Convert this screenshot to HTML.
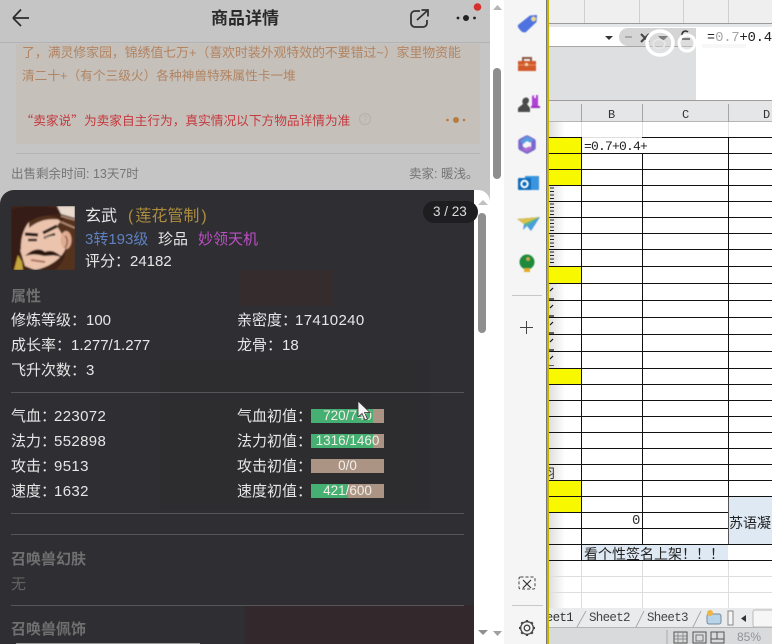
<!DOCTYPE html>
<html><head><meta charset="utf-8"><style>
html,body{margin:0;padding:0;width:772px;height:644px;overflow:hidden;background:#fff}
*{box-sizing:border-box}
body{font-family:"Liberation Sans","Noto Sans CJK SC",sans-serif;position:relative}
.a{position:absolute;white-space:nowrap}
.t{position:absolute;white-space:nowrap;font-size:15px;line-height:20px;color:#e6e6e6;margin-top:1px}
.t b{font-weight:normal;letter-spacing:.35px;margin-left:-2px}
.h{position:absolute;left:549px;width:223px;height:1px;background:#111}
.v{position:absolute;width:1px;background:#111}
.y{position:absolute;left:549px;width:32px;background:#f8f800}
.l{position:absolute;left:11px;width:453px;height:1px;background:#56565a}
.bar{position:absolute;left:311px;width:73px;height:14px;background:#ab9484;color:#f2efe8;font-size:13.500px;line-height:14px;text-align:center;overflow:hidden}
.bar i{position:absolute;left:0;top:0;height:14px;background:#45b072}
.bar span{position:relative}
.lg{position:absolute;left:549px;width:223px;height:1px;background:#dedede}
.mono{font-family:"Liberation Mono","Noto Sans CJK SC",monospace}
.q{font-family:"Noto Sans CJK SC",sans-serif}
</style></head><body>

<!-- left page -->
<div class="a" style="left:0;top:0;width:490px;height:644px;background:#c5c5c5"></div>
<div class="a" style="left:0;top:42px;width:490px;height:1px;background:#b2b2b2"></div>
<svg class="a" style="left:0;top:0" width="490" height="44" viewBox="0 0 490 44">
<path d="M29 18H13M13 18L21 9.500M13 18L21 26" fill="none" stroke="#2b2b2b" stroke-width="1.700"/>
<path d="M420 11h-5a4 4 0 0 0-4 4v8a4 4 0 0 0 4 4h8a4 4 0 0 0 4-4v-3M417 20L427.500 10.500M421.500 10h6.500v6.500" fill="none" stroke="#333" stroke-width="1.800"/>
<circle cx="466" cy="18" r="3" fill="#222"/><circle cx="458" cy="18" r="1.400" fill="#222"/><circle cx="474.500" cy="18" r="1.400" fill="#222"/>
<circle cx="477.500" cy="7" r="3.800" fill="#d5302c"/>
</svg>
<div class="a" style="left:211px;top:9px;font-size:17px;line-height:20px;font-weight:bold;color:#2a2a2a">商品详情</div>
<div class="a" style="left:16px;top:44px;width:464px;height:100px;background:#c5c0b9"></div>
<div class="a" style="left:22px;top:43px;font-size:12.850px;line-height:20px;color:#b28462">了，满灵修家园，锦绣值七万+（喜欢时装外观特效的不要错过~）家里物资能</div>
<div class="a" style="left:22px;top:66px;font-size:12.700px;line-height:20px;color:#b28462">清二十+（有个三级火）各种神兽特殊属性卡一堆</div>
<div class="a" style="left:20.500px;top:110px;font-size:12.700px;line-height:20px;color:#c5393f"><span class="q">“</span>卖家说<span class="q">”</span>为卖家自主行为，真实情况以下方物品详情为准</div>
<div class="a" style="left:359px;top:113px;width:12px;height:12px;border:1px solid #b5b0a8;border-radius:50%;font-size:9px;line-height:10px;text-align:center;color:#b5b0a8">?</div>
<svg class="a" style="left:440px;top:112px" width="30" height="16"><circle cx="16" cy="8" r="3" fill="#b77c3e"/><circle cx="7.500" cy="8" r="1.300" fill="#b77c3e"/><circle cx="24" cy="8" r="1.300" fill="#b77c3e"/></svg>
<div class="a" style="left:16px;top:153px;width:464px;height:1px;background:#b5b5b5"></div>
<div class="a" style="left:11px;top:165px;font-size:12.500px;line-height:18px;color:#757575">出售剩余时间: 13天7时</div>
<div class="a" style="left:409px;top:165px;font-size:12.500px;line-height:18px;color:#757575">卖家: 暖浅。</div>

<!-- scrollbar -->
<div class="a" style="left:490px;top:0;width:14px;height:644px;background:#fff"></div>
<div class="a" style="left:493px;top:68px;width:8px;height:111px;border-radius:4px;background:#8e8e8e"></div>
<svg class="a" style="left:490px;top:0" width="14" height="14"><path d="M3 10L7.500 5L12 10Z" fill="#b5b5b5"/></svg>
<svg class="a" style="left:490px;top:628px" width="14" height="14"><path d="M3 3L7.500 8L12 3Z" fill="#a0a0a0"/></svg>

<!-- dark panel -->
<div class="a" style="left:474px;top:190px;width:16px;height:454px;background:#fff;border-radius:0 12px 0 0"></div>
<div class="a" style="left:0;top:190px;width:474px;height:454px;background:#2f2f33;border-radius:14px 0 0 0;overflow:hidden">
  <div class="a" style="left:240px;top:80px;width:94px;height:36px;background:#352c2e"></div>
  <div class="a" style="left:160px;top:170px;width:270px;height:150px;background:#2d2d30"></div>
  <div class="a" style="left:245px;top:415px;width:229px;height:39px;background:#33292c"></div>
</div>
<div class="a" style="left:478px;top:213px;width:8px;height:120px;border-radius:4px;background:#8f8f8f"></div>
<svg class="a" style="left:476px;top:195px" width="14" height="14"><path d="M2 10L7 5L12 10Z" fill="#c0c0c0"/></svg>
<svg class="a" style="left:476px;top:626px" width="14" height="14"><path d="M2 4L7 9L12 4Z" fill="#8f8f8f"/></svg>
<div class="a" style="left:423px;top:201px;width:55px;height:22px;background:#1e1e21;border-radius:11px;color:#dcdcdc;font-size:13.500px;line-height:22px;padding-left:10px">3 / 23</div>

<!-- avatar -->
<svg class="a" style="left:11px;top:206px" width="64" height="64" viewBox="0 0 64 64">
<defs><filter id="b" x="-5%" y="-5%" width="110%" height="110%"><feGaussianBlur stdDeviation="0.900"/></filter></defs>
<g filter="url(#b)">
<rect width="64" height="64" fill="#3f2217"/>
<path d="M12 20C24 8 44 6 54 20L54 44C48 56 34 62 24 64L14 60L8 40Z" fill="#ecc4ae"/>
<path d="M0 4C20-2 44 0 58 8C40 6 28 12 18 16C12 24 10 32 10 42L6 64H0Z" fill="#351d14"/>
<path d="M18 16C30 8 44 8 50 14C38 12 28 14 18 22Z" fill="#52301f"/>
<path d="M46 0H64V12L50 8Z" fill="#ead9cd"/>
<path d="M46 20C54 8 60 12 64 16V64H44C54 56 58 44 52 30Z" fill="#55311f"/>
<path d="M50 10L64 14M50 16L64 22" stroke="#b89078" stroke-width="1.500"/>
<ellipse cx="55" cy="34" rx="5.500" ry="9" fill="#e0ac92"/>
<path d="M54 30C57 32 57 38 54 42" fill="none" stroke="#8f5f48" stroke-width="1.500"/>
<path d="M14 28L27 29M32 27L46 20" stroke="#24130d" stroke-width="3.200"/>
<path d="M17 34L26 34M33 32L44 28" stroke="#2c1a14" stroke-width="2.500"/>
<path d="M34 32L42 30" stroke="#d8c8a8" stroke-width="1"/>
<path d="M14 50C22 42 30 42 34 46C40 43 46 46 52 52C44 48 38 50 33 50C26 48 20 48 14 50Z" fill="#2a160f"/>
<path d="M20 54L34 56" stroke="#a8705c" stroke-width="2"/>
<path d="M3 64L7 49L11 56L12 64Z" fill="#c7a53a"/>
</g>
</svg>

<div class="t" style="left:85px;top:206px;font-size:16px">玄武</div>
<div class="t" style="left:128px;top:206px;font-size:16px;color:#ad8e3e">(<span style="margin:0 2px">莲花管制</span>)</div>
<div class="t" style="left:85px;top:229px;color:#5f80c0">3转193级</div>
<div class="t" style="left:158px;top:229px">珍品</div>
<div class="t" style="left:198px;top:229px;color:#bb4fc4">妙领天机</div>
<div class="t" style="left:85px;top:251px">评分：24182</div>

<div class="t" style="left:11px;top:286px;color:#6f6f6f;font-weight:bold">属性</div>
<div class="t" style="left:11px;top:310px">修炼等级：100</div>
<div class="t" style="left:237px;top:310px">亲密度：<b>17410240</b></div>
<div class="t" style="left:11px;top:335px">成长率：1.277/1.277</div>
<div class="t" style="left:237px;top:335px">龙骨：18</div>
<div class="t" style="left:11px;top:360px">飞升次数：3</div>
<div class="l" style="top:392px"></div>

<div class="t" style="left:11px;top:406px">气血：<b>223072</b></div>
<div class="t" style="left:237px;top:406px">气血初值：</div>
<div class="bar" style="top:409px"><i style="width:62px"></i><span>720/740</span></div>
<div class="t" style="left:11px;top:431px">法力：<b>552898</b></div>
<div class="t" style="left:237px;top:431px">法力初值：</div>
<div class="bar" style="top:434px"><i style="width:62px"></i><span>1316/1460</span></div>
<div class="t" style="left:11px;top:456px">攻击：<b>9513</b></div>
<div class="t" style="left:237px;top:456px">攻击初值：</div>
<div class="bar" style="top:459px"><span>0/0</span></div>
<div class="t" style="left:11px;top:481px">速度：<b>1632</b></div>
<div class="t" style="left:237px;top:481px">速度初值：</div>
<div class="bar" style="top:484px"><i style="width:37px"></i><span>421/600</span></div>

<div class="l" style="top:513px"></div>
<div class="l" style="top:534px"></div>
<div class="t" style="left:11px;top:549px;color:#707070;font-weight:bold">召唤兽幻肤</div>
<div class="t" style="left:11px;top:574px;color:#626262">无</div>
<div class="l" style="top:605px"></div>
<div class="t" style="left:11px;top:619px;color:#707070;font-weight:bold">召唤兽佩饰</div>
<div class="a" style="left:16px;top:643px;width:184px;height:1px;background:#999"></div>

<!-- cursor -->
<svg class="a" style="left:356px;top:400px" width="16" height="22"><path d="M2 1V17L6 13.500L9 20L11.500 19L8.500 12.500H14Z" fill="#f4f4f4" stroke="#333" stroke-width=".8"/></svg>

<!-- side toolbar -->
<div class="a" style="left:504px;top:0;width:43px;height:644px;background:#f5f5f5"></div>
<svg class="a" style="left:504px;top:0;filter:blur(.4px)" width="43" height="644" viewBox="0 0 43 644">
<path d="M14 25L26 15.500L33 15L32.500 22L22 32C20 33 18 32 17 31L14.500 28C14 27 13.500 26 14 25Z" fill="#4e72e0"/><circle cx="29.500" cy="19" r="2.500" fill="#e8d890"/>
<path d="M14 61H32V71H14Z" fill="#d05a2c"/><path d="M14 65H32" stroke="#e8905c" stroke-width="1"/><path d="M19 61V58H27V61" fill="none" stroke="#8a5a44" stroke-width="2"/><rect x="21" y="63" width="3" height="3" fill="#f5d5b0"/>
<path d="M14 112V108L19 104C16 98 24 95 25 100C25 102 24 103 23 104L26 108V112Z" fill="#4a4a4a"/>
<path d="M28 96L30 95V98H32V95H34V106H28Z" fill="#b040d8"/><path d="M27 106H36V108H27Z" fill="#9a30c0"/>
<path d="M23 137.500L29.500 141V148L23 151.500L16.500 148V141Z" fill="#f5f5f5" stroke="#7a68cc" stroke-width="4.500" stroke-linejoin="round"/><path d="M16 141L23 136L30 140L26 142.500L23 141L19 144Z" fill="#5a9adf"/><path d="M17 149L23 152L29 148L25 146.500L22 148Z" fill="#b06cd0"/>
<rect x="21" y="176" width="14" height="14" fill="#3a95de"/><rect x="14" y="178" width="13" height="12" rx="1" fill="#0f6dbd"/><circle cx="20.500" cy="184" r="3.200" fill="none" stroke="#fff" stroke-width="2"/>
<path d="M13 219L36 217L27 231L23 226L19 230L20 224Z" fill="#4a9ce0"/><path d="M13 219L36 217L20 224Z" fill="#dcc04e"/><path d="M20 224L36 217L23 226Z" fill="#58b88c"/>
<circle cx="23" cy="262" r="7.500" fill="#1f8a3c"/><circle cx="24" cy="259" r="2" fill="#c9a84a"/><rect x="20" y="268" width="6" height="4" fill="#e3a92c"/>
</svg>
<div class="a" style="left:512px;top:295px;width:30px;height:1px;background:#c8c8c8"></div>
<div class="a" style="left:512px;top:605px;width:31px;height:1px;background:#c8c8c8"></div>
<svg class="a" style="left:504px;top:0" width="43" height="644" viewBox="0 0 43 644">
<path d="M16 327.500H29M22.500 321V334" stroke="#444" stroke-width="1"/>
<rect x="15" y="577" width="16" height="12" rx="1.500" fill="none" stroke="#444" stroke-dasharray="3 2"/><path d="M19 580L27 588M27 580L19 588" stroke="#333" stroke-width="1.200"/>
<circle cx="23" cy="628" r="2.800" fill="none" stroke="#444" stroke-width="1.300"/>
<circle cx="23" cy="628" r="6.300" fill="none" stroke="#444" stroke-width="1.300"/>
<path d="M23 620V622M23 634V636M15 628H17M29 628H31M17.300 622.300L18.700 623.700M27.300 632.300L28.700 633.700M28.700 622.300L27.300 623.700M18.700 632.300L17.300 633.700" stroke="#444" stroke-width="2.200"/>
</svg>

<!-- spreadsheet -->
<div class="a" style="left:549px;top:0;width:223px;height:24px;background:#efefef"></div>
<div class="a" style="left:584px;top:0;width:1px;height:24px;background:#cfcfcf"></div>
<div class="a" style="left:639px;top:0;width:1px;height:24px;background:#cfcfcf"></div>
<div class="a" style="left:683px;top:0;width:1px;height:24px;background:#cfcfcf"></div>
<div class="a" style="left:728px;top:0;width:1px;height:24px;background:#cfcfcf"></div>
<div class="a" style="left:549px;top:23px;width:223px;height:1px;background:#9a9a9a"></div>
<div class="a" style="left:549px;top:24px;width:223px;height:3px;background:#e4e6e8"></div>
<div class="a" style="left:549px;top:27px;width:147px;height:19px;background:#fff"></div>
<div class="a" style="left:549px;top:46px;width:147px;height:54px;background:#dddfe1"></div>
<div class="a" style="left:549px;top:46px;width:147px;height:1px;background:#a8a8a8"></div>
<div class="a" style="left:696px;top:27px;width:76px;height:73px;background:#fff"></div>
<div class="a" style="left:549px;top:100px;width:223px;height:5px;background:#e6e6e6;border-top:1px solid #9e9e9e;border-bottom:1px solid #a0a0a0"></div>
<div class="a" style="left:619px;top:28px;width:77px;height:18px;border-radius:9px 0 0 9px;background:#d5d5d5"></div>
<svg class="a" style="left:600px;top:26px" width="100" height="24"><path d="M5 10H13L9 14Z" fill="#333"/><path d="M25 11H32" stroke="#aaa" stroke-width="2"/><path d="M41 8L49 16M49 8L41 16" stroke="#444" stroke-width="2"/><path d="M58 10H68L63 15Z" fill="#444"/><path d="M82 9C82 5 86 4 88 6M82 13H90" stroke="#333" stroke-width="1.500" fill="none"/></svg>
<div class="a mono" style="left:707px;top:29px;font-size:14px;line-height:18px;color:#222;letter-spacing:-.3px">=0.7+0.4</div>
<!-- watermark -->
<div class="a" style="left:714px;top:30px;width:26px;height:16px;background:rgba(255,255,255,.6)"></div>
<svg class="a" style="left:640px;top:24px" width="110" height="38"><ellipse cx="20" cy="19" rx="13" ry="12" fill="rgba(230,230,230,.35)" stroke="#fff" stroke-width="3.500"/><ellipse cx="19" cy="20" rx="6" ry="4.500" fill="none" stroke="#e8e8e8" stroke-width="1.500"/><circle cx="47" cy="19" r="8" fill="rgba(255,255,255,.2)" stroke="#fff" stroke-width="3"/><path d="M62 22H106" stroke="#f4f4f4" stroke-width="4" opacity=".7"/></svg>

<!-- column header -->
<div class="a" style="left:549px;top:104px;width:223px;height:18px;background:#e4e6e8;border-bottom:1px solid #b5b5b5"></div>
<div class="a" style="left:581px;top:104px;width:1px;height:18px;background:#a5a5a5"></div>
<div class="a" style="left:642px;top:104px;width:1px;height:18px;background:#a5a5a5"></div>
<div class="a" style="left:728px;top:104px;width:1px;height:18px;background:#a5a5a5"></div>
<div class="a mono" style="left:608px;top:107px;font-size:12px;line-height:16px;color:#333">B</div>
<div class="a mono" style="left:682px;top:107px;font-size:12px;line-height:16px;color:#333">C</div>
<div class="a mono" style="left:763px;top:107px;font-size:12px;line-height:16px;color:#333">D</div>
<div class="a" style="left:549px;top:122px;width:223px;height:490px;background:#fff"></div>
<div class="a" style="left:581px;top:122px;width:1px;height:16px;background:#e2e2e2"></div>
<div class="a" style="left:642px;top:122px;width:1px;height:16px;background:#e2e2e2"></div>
<div class="a" style="left:728px;top:122px;width:1px;height:16px;background:#e2e2e2"></div>

<div class="a" style="left:549px;top:122px;width:16px;height:490px;background:linear-gradient(90deg,rgba(190,190,190,.5),rgba(255,255,255,0))"></div>
<div class="y" style="top:137px;height:48px"></div>
<div class="y" style="top:267px;height:16px"></div>
<div class="y" style="top:369px;height:15px"></div>
<div class="y" style="top:481px;height:31px"></div>

<div class="h" style="top:137px"></div><div class="h" style="top:153px"></div><div class="h" style="top:169px"></div><div class="h" style="top:185px"></div><div class="h" style="top:201px"></div><div class="h" style="top:217px"></div><div class="h" style="top:233px"></div><div class="h" style="top:249px"></div><div class="h" style="top:266px"></div><div class="h" style="top:283px"></div><div class="h" style="top:300px"></div><div class="h" style="top:317px"></div><div class="h" style="top:334px"></div><div class="h" style="top:351px"></div><div class="h" style="top:368px"></div><div class="h" style="top:384px"></div><div class="h" style="top:400px"></div><div class="h" style="top:416px"></div><div class="h" style="top:432px"></div><div class="h" style="top:448px"></div><div class="h" style="top:464px"></div><div class="h" style="top:480px"></div><div class="h" style="top:496px"></div><div class="h" style="top:512px"></div><div class="h" style="top:528px"></div><div class="h" style="top:544px"></div><div class="h" style="top:560px"></div>
<div class="a" style="left:582px;top:137px;width:60px;height:1px;background:#dedede"></div>
<div class="a" style="left:729px;top:497px;width:43px;height:47px;background:#dfe9f4"></div>
<div class="a" style="left:582px;top:545px;width:146px;height:15px;background:#dfe9f4"></div>
<div class="v" style="left:581px;top:137px;height:424px"></div>
<div class="v" style="left:642px;top:153px;height:392px"></div>
<div class="v" style="left:728px;top:137px;height:360px"></div>
<div class="a" style="left:728px;top:497px;width:1px;height:47px;background:#555"></div>
<div class="lg" style="top:576px"></div><div class="lg" style="top:592px"></div>
<div class="a" style="left:581px;top:561px;width:1px;height:47px;background:#dedede"></div>
<div class="a" style="left:642px;top:561px;width:1px;height:47px;background:#dedede"></div>
<div class="a" style="left:728px;top:561px;width:1px;height:47px;background:#dedede"></div>

<div class="a mono" style="left:584px;top:139px;font-size:13px;line-height:16px;color:#222;letter-spacing:-.8px">=0.7+0.4+</div>
<div class="a mono" style="left:632px;top:513px;font-size:14px;line-height:16px;color:#333">0</div>
<div class="a" style="left:729px;top:514px;font-size:14px;line-height:18px;color:#222;font-family:'Noto Sans CJK SC',sans-serif">苏语凝</div>
<div class="a" style="left:584px;top:546px;font-size:14px;line-height:17px;color:#222;height:14px;overflow:hidden;font-family:'Noto Sans CJK SC',sans-serif">看个性签名上架！！！</div>

<!-- clipped text strip at the left of column A -->
<svg class="a" style="left:549px;top:186px" width="12" height="180"><path d="M1 2h4M1 5.500h4M1 9h4M1 12.500h4M1 18h4M1 21.500h4M1 25h4M1 28.500h4M1 34h4M1 37.500h4M1 41h4M1 44.500h4M1 50h4M1 53.500h4M1 57h4M1 60.500h4M1 66h4M1 69.500h4M1 73h4M1 76.500h4" stroke="#222"/><path d="M1 105L4 102M0 113H5M1 122L4 119M0 130H5M1 139L4 136M0 147H5M1 156L4 153M0 164H5M1 173L4 170M0 180H5" stroke="#111" stroke-width="1.200"/></svg>
<div class="a" style="left:549px;top:465px;font-size:13px;line-height:16px;color:#333;width:7px;overflow:hidden;font-family:'Noto Sans CJK SC',sans-serif"><span style="display:inline-block;margin-left:-7px">羽</span></div>

<!-- tabs and status -->
<div class="a" style="left:549px;top:608px;width:223px;height:20px;background:#e9ebed"></div>
<div class="a" style="left:549px;top:627px;width:223px;height:1px;background:#b5b5b5"></div>
<div class="a" style="left:549px;top:628px;width:223px;height:16px;background:#d8dadc"></div>
<div class="a mono" style="left:549px;top:610px;font-size:12.500px;line-height:16px;color:#333;letter-spacing:-.7px;width:24px;overflow:hidden;direction:rtl">Sheet1</div>
<div class="a mono" style="left:589px;top:610px;font-size:12.500px;line-height:16px;color:#444;letter-spacing:-.7px">Sheet2</div>
<div class="a mono" style="left:647px;top:610px;font-size:12.500px;line-height:16px;color:#444;letter-spacing:-.7px">Sheet3</div>
<svg class="a" style="left:575px;top:608px" width="197" height="36"><path d="M2 19L11 3M61 19L69 3M118 19L126 3" stroke="#aaa" fill="none"/><rect x="132" y="6" width="14" height="10" rx="2" fill="#b8d4ea" stroke="#7a8a9a"/><circle cx="135" cy="5" r="3" fill="#efb644"/><rect x="153" y="3" width="5" height="14" fill="#f4f4f4" stroke="#888"/><path d="M171 7V14L166 10.500Z" fill="#333"/><rect x="178" y="2" width="22" height="17" rx="2" fill="#f6f6f6" stroke="#bbb"/><path d="M92 22V36" stroke="#aaa"/><rect x="99" y="24" width="13" height="11" fill="none" stroke="#555"/><path d="M99 28H112M99 31H112M103 24V35M108 24V35" stroke="#777" stroke-width=".7"/><rect x="118" y="24" width="13" height="11" fill="none" stroke="#555"/><rect x="121" y="27" width="7" height="6" fill="none" stroke="#777"/><rect x="136" y="24" width="13" height="11" fill="none" stroke="#555"/><path d="M136 31H149M142 24V31" stroke="#555"/></svg>
<div class="a" style="left:737px;top:629px;font-size:12px;line-height:16px;color:#8f9298">85%</div>

<!-- divider between toolbar and sheet -->
<div class="a" style="left:547px;top:0;width:2px;height:644px;background:#c8b500"></div>
<div class="a" style="left:546px;top:0;width:1px;height:644px;background:#777"></div>
</body></html>
